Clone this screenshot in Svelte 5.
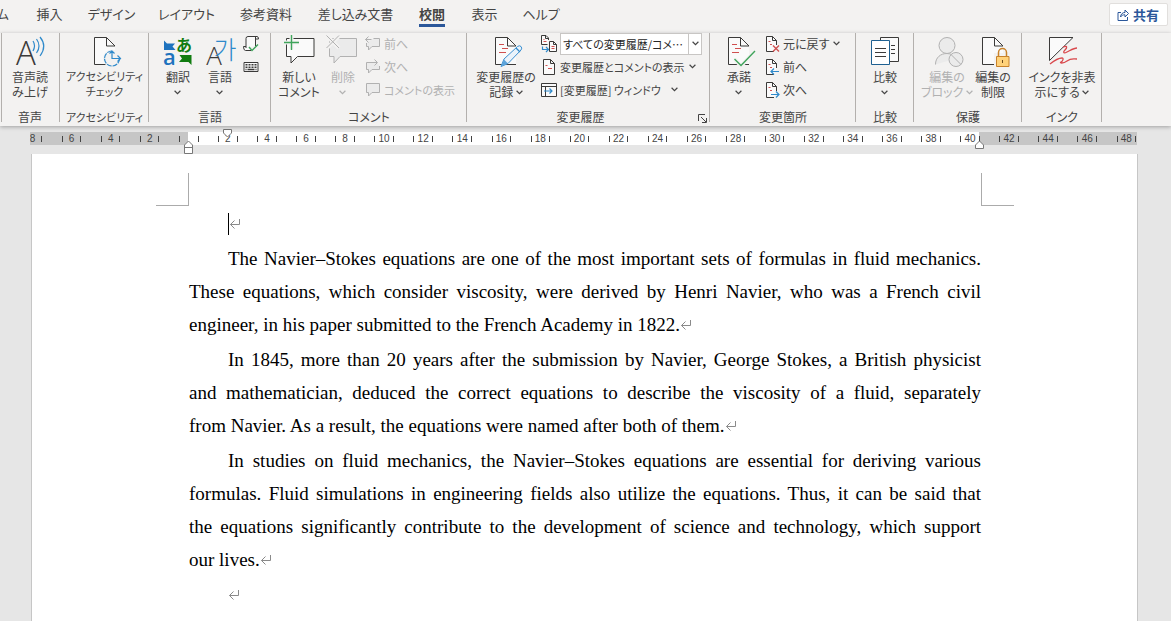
<script lang="ts">
  const tabs = ["ム", "挿入", "デザイン", "レイアウト", "参考資料", "差し込み文書", "校閲", "表示", "ヘルプ"];
  let activeTab = $state("校閲");
  let markup = $state("all");

  // one ruler cell covers two characters, from -8 to 48
  const rulerMarks = Array.from({ length: 29 }, (_, i) => Math.abs(i * 2 - 8));

  const paragraphs = [
    [
      "The Navier–Stokes equations are one of the most important sets of formulas in fluid mechanics.",
      "These equations, which consider viscosity, were derived by Henri Navier, who was a French civil",
      "engineer, in his paper submitted to the French Academy in 1822.",
    ],
    [
      "In 1845, more than 20 years after the submission by Navier, George Stokes, a British physicist",
      "and mathematician, deduced the correct equations to describe the viscosity of a fluid, separately",
      "from Navier. As a result, the equations were named after both of them.",
    ],
    [
      "In studies on fluid mechanics, the Navier–Stokes equations are essential for deriving various",
      "formulas. Fluid simulations in engineering fields also utilize the equations. Thus, it can be said that",
      "the equations significantly contribute to the development of science and technology, which support",
      "our lives.",
    ],
  ];
</script>

{#snippet chevron()}
  <svg class="chevron" viewBox="0 0 7 5"><path d="M.6.8l2.9 2.8L6.4.8" /></svg>
{/snippet}

{#snippet bigDoc()}
  <path class="paper" d="M26 28.5H5.5v-27h12l8.5 8.5" />
  <path class="line" d="M17.5 1.5V10H26" />
{/snippet}

{#snippet smallDoc()}
  <path class="paper" d="M10 15.5H2.5V.5h6l4 4V9" />
  <path class="line" d="M8.5.5v4h4" />
{/snippet}

{#snippet mark()}
  <svg class="mark" viewBox="0 0 12 12"><path d="M10.5 1v5.5H1.5M5.5 2.5l-4 4 4 4" /></svg>
{/snippet}

<div class="word">
  <header class="top">
    <nav class="tabs">
      {#each tabs as tab}
        <button class="tab" class:active={tab === activeTab} onclick={() => (activeTab = tab)}>
          <span>{tab}</span>
        </button>
      {/each}
    </nav>
    <button class="share">
      <svg viewBox="0 0 12 12"><path d="M4 3.5H1v8h9.500V8M3.500 8c.3-3 2-4.500 4.500-4.500V1l3.500 3.500L8 8V5.800C6 5.800 4.600 6.300 3.500 8z" /></svg>
      共有
    </button>
  </header>

  <div class="ribbon">
    <section class="group">
      <div class="body center">
        <button class="big">
          <svg class="icon" viewBox="0 0 32 32">
            <text class="thin-a" x="12" y="29" font-size="33">A</text>
            <path class="blue" d="M19 5q3 4.500 0 10M22.500 3q5 7 0 14M26 1q7.500 9 0 19" />
          </svg>
          <span>音声読<br />み上げ</span>
        </button>
      </div>
      <h2>音声</h2>
    </section>

    <section class="group kana">
      <div class="body center">
        <button class="big">
          <svg class="icon" viewBox="0 0 32 32">
            {@render bigDoc()}
            <circle cx="23" cy="22.500" r="9" fill="#f3f2f1" />
            <path class="blue dashed" d="M23 15a7.500 7.500 0 1 0 7.500 7.500" />
            <path class="blue" d="M23 15v7.500h8.500M20.500 17.500L23 15l2.500 2.500M28.500 19.500l3 3-3 3" />
          </svg>
          <span>アクセシビリティ<br />チェック</span>
        </button>
      </div>
      <h2>アクセシビリティ</h2>
    </section>

    <section class="group">
      <div class="body inset">
        <button class="big">
          <svg class="icon" viewBox="0 0 32 32">
            <path d="M2 4.500l3 3h8l-2.500 3 3 3.500H2z" fill="#1e73be" />
            <text x="22" y="15" font-size="16" font-weight="700" fill="#107c10" text-anchor="middle">あ</text>
            <text class="latin" x="7.500" y="29" font-size="22" font-weight="600" fill="#1e73be" text-anchor="middle">a</text>
            <path d="M29.500 19v10l-3-3H17l3-3.500-2.500-3.500z" fill="#107c10" />
          </svg>
          <span>翻訳<br />{@render chevron()}</span>
        </button>
        <button class="big">
          <svg class="icon" viewBox="0 0 32 32">
            <text class="thin-a" x="10" y="29" font-size="26">A</text>
            <text class="hangul" x="21" y="23" font-size="25">가</text>
          </svg>
          <span>言語<br />{@render chevron()}</span>
        </button>
        <div class="small-list tools">
          <button class="small" aria-label="文書校正の更新">
            <svg class="icon-s" viewBox="0 0 16 16">
              <path class="paper" d="M3 12V2.500Q3 .5 5 .5h9q1.500 0 1.500 2.500h-3v7M12.500 3V1M3 10.500H.5q0 4 2 4H8" />
              <path class="green" d="M6 11l3 3.500 6-6" />
            </svg>
          </button>
          <button class="small" aria-label="キーボード">
            <svg class="icon-s" viewBox="0 0 16 16">
              <path class="paper" d="M1 3.500h14v9H1z" />
              <path class="line" stroke-width="1.500" stroke-dasharray="2 1" d="M2.500 5.800h11.500M2.500 8.200h11.500" />
              <path class="line" stroke-width="1.300" d="M4.500 10.500h7M2.500 10.500h1M12.500 10.500h1" />
            </svg>
          </button>
        </div>
      </div>
      <h2>言語</h2>
    </section>

    <section class="group">
      <div class="body comments">
        <button class="big">
          <svg class="icon" viewBox="0 0 32 32">
            <path class="paper" d="M3.500 2.500h27.500v18H14.500L8 27v-6.500H3.500z" />
            <path d="M8.500 0v13M1 6.500h15" stroke="#f3f2f1" stroke-width="4" />
            <path class="green" d="M8.500-1v15M1 6.500h15" />
          </svg>
          <span>新しい<br />コメント</span>
        </button>
        <button class="big" disabled>
          <svg class="icon" viewBox="0 0 32 32">
            <path class="faded" d="M2.500 2.500h27v18H13L7 27v-6.500H2.500z" />
            <path d="M0 0l12 12M12 0L0 12" stroke="#f3f2f1" stroke-width="4" />
            <path class="faded" d="M-.5-.5l12.500 12.500M12-.5L-.5 12" />
          </svg>
          <span>削除<br />{@render chevron()}</span>
        </button>
        <div class="small-list">
          <button class="small" disabled>
            <svg class="icon-s" viewBox="0 0 16 16">
              <path class="faded" d="M8.500 2.500h6v8H7L3.500 14v-3.500h-2V7M6.500 3.500h-6M3.500.5l-3 3 3 3" />
            </svg>
            前へ
          </button>
          <button class="small" disabled>
            <svg class="icon-s" viewBox="0 0 16 16">
              <path class="faded" d="M14.500 7v3.500H7L3.500 14v-3.500h-2v-7H12M9.500.5l3 3-3 3" />
            </svg>
            次へ
          </button>
          <button class="small kana" disabled>
            <svg class="icon-s" viewBox="0 0 16 16">
              <path class="faded" d="M1.500 1.500h13v9H7L3.500 14v-3.500h-2z" />
            </svg>
            コメントの表示
          </button>
        </div>
      </div>
      <h2>コメント</h2>
    </section>

    <section class="group with-launcher">
      <div class="body tracking">
        <button class="big wide">
          <svg class="icon" viewBox="0 0 32 32">
            {@render bigDoc()}
            <path class="red" d="M9 8.500h5M12 12.500h6M9 16.500h7" />
            <path d="M11 30.500l3-7.500L27.500 10.500q2-1.500 3.500 0t0 3.500L18 27.500z" fill="#eaf3fb" stroke="#3a8fd0" />
            <path d="M11 30.500l3-7 4 4z" fill="#5ba3da" />
            <path class="blue" d="M26 12l4 4" />
          </svg>
          <span>変更履歴の<br />記録 {@render chevron()}</span>
        </button>
        <div class="small-list kana">
          <div class="field">
            <label for="markup" aria-label="変更内容の表示">
              <svg class="icon-s" viewBox="0 0 16 16">
                <path class="paper" d="M6.500 8.500h-6v-9H5L7.500 2v2M4.500-.5V2.500h3" />
                <path class="paper" d="M8.500 5.500h4l3 3v7h-7zM12.500 5.500v3h3" />
                <path class="red" d="M2.500 3.500h1M2.500 5.500h3M10.500 10.500h3M10.500 12.500h3" />
                <path class="blue" d="M1.500 10.500v3H7M5 11l2.500 2.500L5 16" />
              </svg>
            </label>
            <div class="combo">
              <select id="markup" bind:value={markup}>
                <option value="all">すべての変更履歴/コメ…</option>
                <option value="simple">シンプルな変更履歴</option>
                <option value="original">初版</option>
              </select>
              <i>{@render chevron()}</i>
            </div>
          </div>
          <button class="small">
            <svg class="icon-s" viewBox="0 0 16 16">
              <path class="paper" d="M2.500.5h7l4 4v11h-11zM9.500.5v4h4" />
              <path class="red" d="M4.500 6.500h2M7 9.500h4" />
            </svg>
            変更履歴とコメントの表示 {@render chevron()}
          </button>
          <button class="small">
            <svg class="icon-s" viewBox="0 0 16 16">
              <path class="paper" d="M.5 1.500h15v13H.5zM.5 4.500h15M4.500 4.500v10" />
              <path class="blue" d="M3 9h8M8.500 6.500L11 9l-2.500 2.500" />
            </svg>
            [変更履歴] ウィンドウ <em>{@render chevron()}</em>
          </button>
        </div>
      </div>
      <h2>変更履歴</h2>
      <button class="launcher" aria-label="変更履歴オプション">
        <svg viewBox="0 0 9 9"><path d="M.5 7V.5H7M3 3l5 5M8.500 4v4.500H4" /></svg>
      </button>
    </section>

    <section class="group">
      <div class="body inset changes">
        <button class="big">
          <svg class="icon" viewBox="0 0 32 32">
            {@render bigDoc()}
            <path class="red" d="M9 8.500h5M12 12.500h6M9 16.500h7" />
            <path d="M11.500 23l6.500 7 14-15" fill="none" stroke="#f3f2f1" stroke-width="4" />
            <path class="green" d="M11.500 23l6.500 6.500L32 15" />
          </svg>
          <span>承諾<br />{@render chevron()}</span>
        </button>
        <div class="small-list">
          <button class="small">
            <svg class="icon-s" viewBox="0 0 16 16">
              {@render smallDoc()}
              <path class="red" stroke-width="1.400" d="M9 9.500l6 6M15 9.500l-6 6" />
              <path class="red" d="M4.500 5.500h2M6 8.500h2" />
            </svg>
            元に戻す {@render chevron()}
          </button>
          <button class="small">
            <svg class="icon-s" viewBox="0 0 16 16">
              {@render smallDoc()}
              <path class="red" d="M4.500 5.500h2M6 8.500h2" />
              <path class="blue" d="M15 12.500H7M10 9.500l-3 3 3 3" />
            </svg>
            前へ
          </button>
          <button class="small">
            <svg class="icon-s" viewBox="0 0 16 16">
              {@render smallDoc()}
              <path class="red" d="M4.500 5.500h2M6 8.500h2" />
              <path class="blue" d="M7 12.500h8M12 9.500l3 3-3 3" />
            </svg>
            次へ
          </button>
        </div>
      </div>
      <h2>変更箇所</h2>
    </section>

    <section class="group">
      <div class="body center">
        <button class="big">
          <svg class="icon" viewBox="0 0 32 32">
            <path class="paper" d="M11.500 1.500h18v24h-18z" />
            <path class="line" d="M22 9.500h4M22 13.500h4M22 17.500h4" />
            <path d="M2.500 4.500h18v24h-18z" fill="#fff" stroke="#1e6091" />
            <path class="line" d="M6 12.500h11M6 16.500h11M6 20.500h11" />
          </svg>
          <span>比較<br />{@render chevron()}</span>
        </button>
      </div>
      <h2>比較</h2>
    </section>

    <section class="group">
      <div class="body protect">
        <button class="big" disabled>
          <svg class="icon" viewBox="0 0 32 32">
            <path class="faded" d="M4.500 28.500c0-7 5-11 11.500-11 4 0 7 2 9 5" />
            <circle class="faded" cx="16" cy="9.500" r="8" />
            <circle class="faded" cx="25" cy="23.500" r="7" />
            <path class="faded" d="M20 18.500l10 10" />
          </svg>
          <span>編集の<br />ブロック {@render chevron()}</span>
        </button>
        <button class="big">
          <svg class="icon" viewBox="0 0 32 32">
            {@render bigDoc()}
            <path d="M17 17h16v15H17z" fill="#f3f2f1" />
            <path d="M21.500 20v-3.500a4 4 0 0 1 8 0V20" fill="none" stroke="#c8822b" stroke-width="1.500" />
            <path d="M19.500 20.500h12.500v10H19.500z" fill="#ffd27a" stroke="#c8822b" />
            <path d="M25.500 24v3" stroke="#6b4a1b" />
          </svg>
          <span>編集の<br />制限</span>
        </button>
      </div>
      <h2>保護</h2>
    </section>

    <section class="group">
      <div class="body center">
        <button class="big">
          <svg class="icon" viewBox="0 0 32 32">
            <path class="paper" d="M3.500 1.500H27L3.500 24.500z" />
            <path d="M17 11c5-2 4 1 2 3s-2 4 2 2 7-4 10-4M4 28c5-4 10-6 12-6s1 3-1 4 2 2 6-1 6-2 10-2" fill="none" stroke="#d9484c" stroke-width="1.300" />
          </svg>
          <span>インクを非表<br />示にする {@render chevron()}</span>
        </button>
      </div>
      <h2>インク</h2>
    </section>
  </div>

  <main class="workspace">
    <div class="ruler">
      <div class="scale">
        {#each rulerMarks as value}
          <div class="cell"><span>{value || ""}</span></div>
        {/each}
      </div>
      <svg class="marker first-line" viewBox="0 0 9 9"><path d="M.5.5h8V4l-4 4-4-4z" /></svg>
      <svg class="marker hanging" viewBox="0 0 9 14"><path d="M.5 13.500V5l4-4 4 4v8.500zM.5 7.500h8" /></svg>
      <svg class="marker right" viewBox="0 0 9 9"><path d="M.5 8.500V5l4-4 4 4v3.500z" /></svg>
    </div>

    <article class="page">
      <div class="corners"><i></i><i></i></div>
      <div class="text">
        <p><span class="caret"></span>{@render mark()}</p>
        {#each paragraphs as lines}
          <p>
            {#each lines as line, i}
              <span class="row" class:full={i < lines.length - 1}>{line}{#if i === lines.length - 1}{@render mark()}{/if}</span>
            {/each}
          </p>
        {/each}
        <p>{@render mark()}</p>
      </div>
    </article>
  </main>
</div>

<style>
  :global(body) {
    background: #e6e6e6;
  }

  .word {
    height: 100vh;
    display: flex;
    flex-direction: column;
    overflow: hidden;
    color: #444;
    font-family: "Noto Sans CJK JP", sans-serif;
    font-size: 12px;
    font-feature-settings: "palt";
  }

  button {
    padding: 0;
    border: 0;
    background: none;
    color: inherit;
    font: inherit;
    font-feature-settings: inherit;
    white-space: nowrap;
  }

  button:disabled {
    color: #b1b1b1;
  }

  svg {
    flex: none;
    overflow: visible;
    fill: none;
  }

  /* Tabs */
  .top {
    display: flex;
    justify-content: space-between;
    height: 33px;
    background: #f3f2f1;
  }

  .tabs {
    display: grid;
    grid-template-columns: 23px 53px 71px 79px 80px 99px 54px 51px 62px;
    height: 27px;
    font-size: 13px;
  }

  .tab {
    display: flex;
    justify-content: center;
  }

  .tab:first-child {
    justify-content: flex-end;
    padding-right: 14px;
  }

  .tab span {
    box-sizing: border-box;
    height: 27px;
    line-height: 27px;
    border-bottom: 3px solid transparent;
  }

  .tab.active {
    font-weight: 700;
  }

  .tab.active span {
    border-color: #2b579a;
  }

  .share {
    display: flex;
    align-items: center;
    gap: 4px;
    box-sizing: border-box;
    height: 23px;
    margin: 3px 3px 0 0;
    padding: 0 8px 0 7px;
    background: #fff;
    border: 1px solid #e1dfdd;
    border-radius: 2px;
    color: #2b579a;
    font-size: 13px;
    font-weight: 700;
  }

  .share svg {
    width: 12px;
    height: 12px;
    stroke: #2b579a;
  }

  /* Ribbon */
  .ribbon {
    position: relative;
    z-index: 1;
    display: grid;
    grid-template-columns: 60px 89px 122px 196px 243px 146px 58px 108px 80px;
    height: 93px;
    background: linear-gradient(#b3b0ad, #b3b0ad) 1px 0 / 1px 89px no-repeat #f3f2f1;
    box-shadow: 0 1px 4px rgba(0, 0, 0, 0.3);
  }

  .group {
    position: relative;
    min-width: 0;
    background: linear-gradient(#b3b0ad, #b3b0ad) right top / 1px 89px no-repeat;
  }

  .group h2 {
    margin: 0;
    font-size: inherit;
    line-height: 16px;
    font-weight: 400;
    text-align: center;
  }

  .with-launcher h2 {
    padding-right: 16px;
  }

  /* long katakana labels */
  .kana {
    font-size: 11px;
  }

  .body {
    display: flex;
    height: 76px;
  }

  .center {
    justify-content: center;
  }

  .inset {
    padding-left: 8px;
  }

  .comments {
    padding-left: 6px;
  }

  .tracking {
    padding-left: 4px;
  }

  .protect {
    padding-left: 10px;
  }

  .changes {
    gap: 4px;
  }

  .big {
    display: flex;
    flex-direction: column;
    align-items: center;
    gap: 1px;
    width: 42px;
    padding-top: 3px;
    line-height: 15px;
  }

  .comments .big {
    width: 44px;
  }

  .protect .big {
    width: 46px;
  }

  .big.wide {
    width: 70px;
  }

  .icon {
    width: 32px;
    height: 32px;
  }

  .icon-s {
    width: 16px;
    height: 16px;
  }

  .small-list {
    display: flex;
    flex-direction: column;
    margin-top: -1px;
  }

  .tools {
    width: 20px;
    align-items: center;
  }

  .small,
  .field {
    display: flex;
    align-items: center;
    gap: 3px;
    height: 23px;
  }

  .small .chevron {
    margin-left: 1px;
  }

  .small em {
    display: flex;
    margin-left: 6px;
  }

  .field label {
    display: flex;
  }

  .combo {
    position: relative;
    width: 142px;
    height: 22px;
  }

  select {
    box-sizing: border-box;
    width: 100%;
    height: 100%;
    padding: 0 14px 0 2px;
    appearance: none;
    background: #fff;
    border: 1px solid #c8c6c4;
    border-radius: 0;
    color: #262626;
    font: inherit;
    font-feature-settings: inherit;
  }

  .combo i {
    position: absolute;
    top: 1px;
    right: 1px;
    bottom: 1px;
    display: flex;
    align-items: center;
    justify-content: center;
    width: 12px;
    border-left: 1px solid #c8c6c4;
    pointer-events: none;
  }

  .launcher {
    position: absolute;
    right: 3px;
    bottom: 3px;
    display: flex;
  }

  .launcher svg {
    width: 9px;
    height: 9px;
    stroke: #444;
  }

  .chevron {
    width: 7px;
    height: 5px;
    stroke: currentColor;
    stroke-width: 1.2;
  }

  .big .chevron {
    vertical-align: 2px;
  }

  .paper {
    fill: #fafafa;
    stroke: #3b3a39;
  }

  .line {
    stroke: #3b3a39;
  }

  .blue {
    stroke: #2f8acb;
    stroke-width: 1.2;
  }

  .dashed {
    stroke-dasharray: 5 1;
  }

  .green {
    stroke: #3fa45b;
    stroke-width: 1.4;
  }

  .red {
    stroke: #d05050;
  }

  .faded {
    fill: #ebebeb;
    stroke: #b1b1b1;
  }

  .thin-a {
    fill: #3b3a39;
    font-family: "Open Sans", sans-serif;
    font-weight: 300;
    text-anchor: middle;
  }

  .latin {
    font-family: "Open Sans", sans-serif;
  }

  .hangul {
    fill: #2f8acb;
    font-family: "Noto Sans CJK KR", sans-serif;
    font-weight: 300;
    text-anchor: middle;
  }

  /* Ruler */
  .workspace {
    flex: 1;
    display: flex;
    flex-direction: column;
    padding: 6px 33px 0 31px;
    background: #e6e6e6;
  }

  .ruler {
    position: relative;
    height: 13px;
    margin: 0 1px 9px -1px;
    background: linear-gradient(90deg, #c6c6c6 158px, #fff 158px, #fff calc(100% - 158px), #c6c6c6 calc(100% - 158px));
  }

  .scale {
    overflow: hidden;
    display: flex;
    height: 13px;
  }

  .cell {
    flex: 1;
    min-width: 0;
  }

  .cell:first-child {
    margin-left: -17px;
  }

  .cell:last-child {
    margin-right: -9px;
  }

  .cell span {
    display: flex;
    align-items: center;
    justify-content: center;
    height: 6px;
    margin: 4px 25% 0;
    border: solid #444;
    border-width: 0 1px;
    font-family: "Liberation Sans", sans-serif;
    font-size: 10px;
    line-height: 6px;
  }

  .marker {
    position: absolute;
    width: 9px;
    height: 9px;
    fill: #fff;
    stroke: #777;
  }

  .first-line {
    top: -3px;
    left: 193px;
  }

  .hanging {
    top: 8px;
    left: 154px;
    height: 14px;
  }

  .right {
    top: 8px;
    right: 153px;
  }

  /* Page */
  .page {
    flex: 1;
    padding: 19px 123px 0 124px;
    background: #fff;
    border: solid #c6c6c6;
    border-width: 0 1px;
  }

  .corners {
    display: flex;
    justify-content: space-between;
  }

  .corners i {
    box-sizing: border-box;
    width: 33px;
    height: 33px;
    border: solid #ababab;
    border-width: 0 1px 1px 0;
  }

  .corners i:last-child {
    border-width: 0 0 1px 1px;
  }

  .text {
    padding: 1px 33px 0;
    color: #000;
    font-family: "Liberation Serif", serif;
    font-size: 19px;
    line-height: 33px;
    font-feature-settings: normal;
  }

  .text p {
    margin: 0 0 2px;
    text-indent: 39px;
  }

  .row {
    display: block;
  }

  .row + .row {
    text-indent: 0;
  }

  .full {
    text-align: justify;
    text-align-last: justify;
  }

  .caret {
    display: inline-block;
    width: 1px;
    height: 22px;
    background: #000;
    vertical-align: -5px;
  }

  .mark {
    width: 12px;
    height: 12px;
    stroke: #8a8a8a;
  }
</style>
